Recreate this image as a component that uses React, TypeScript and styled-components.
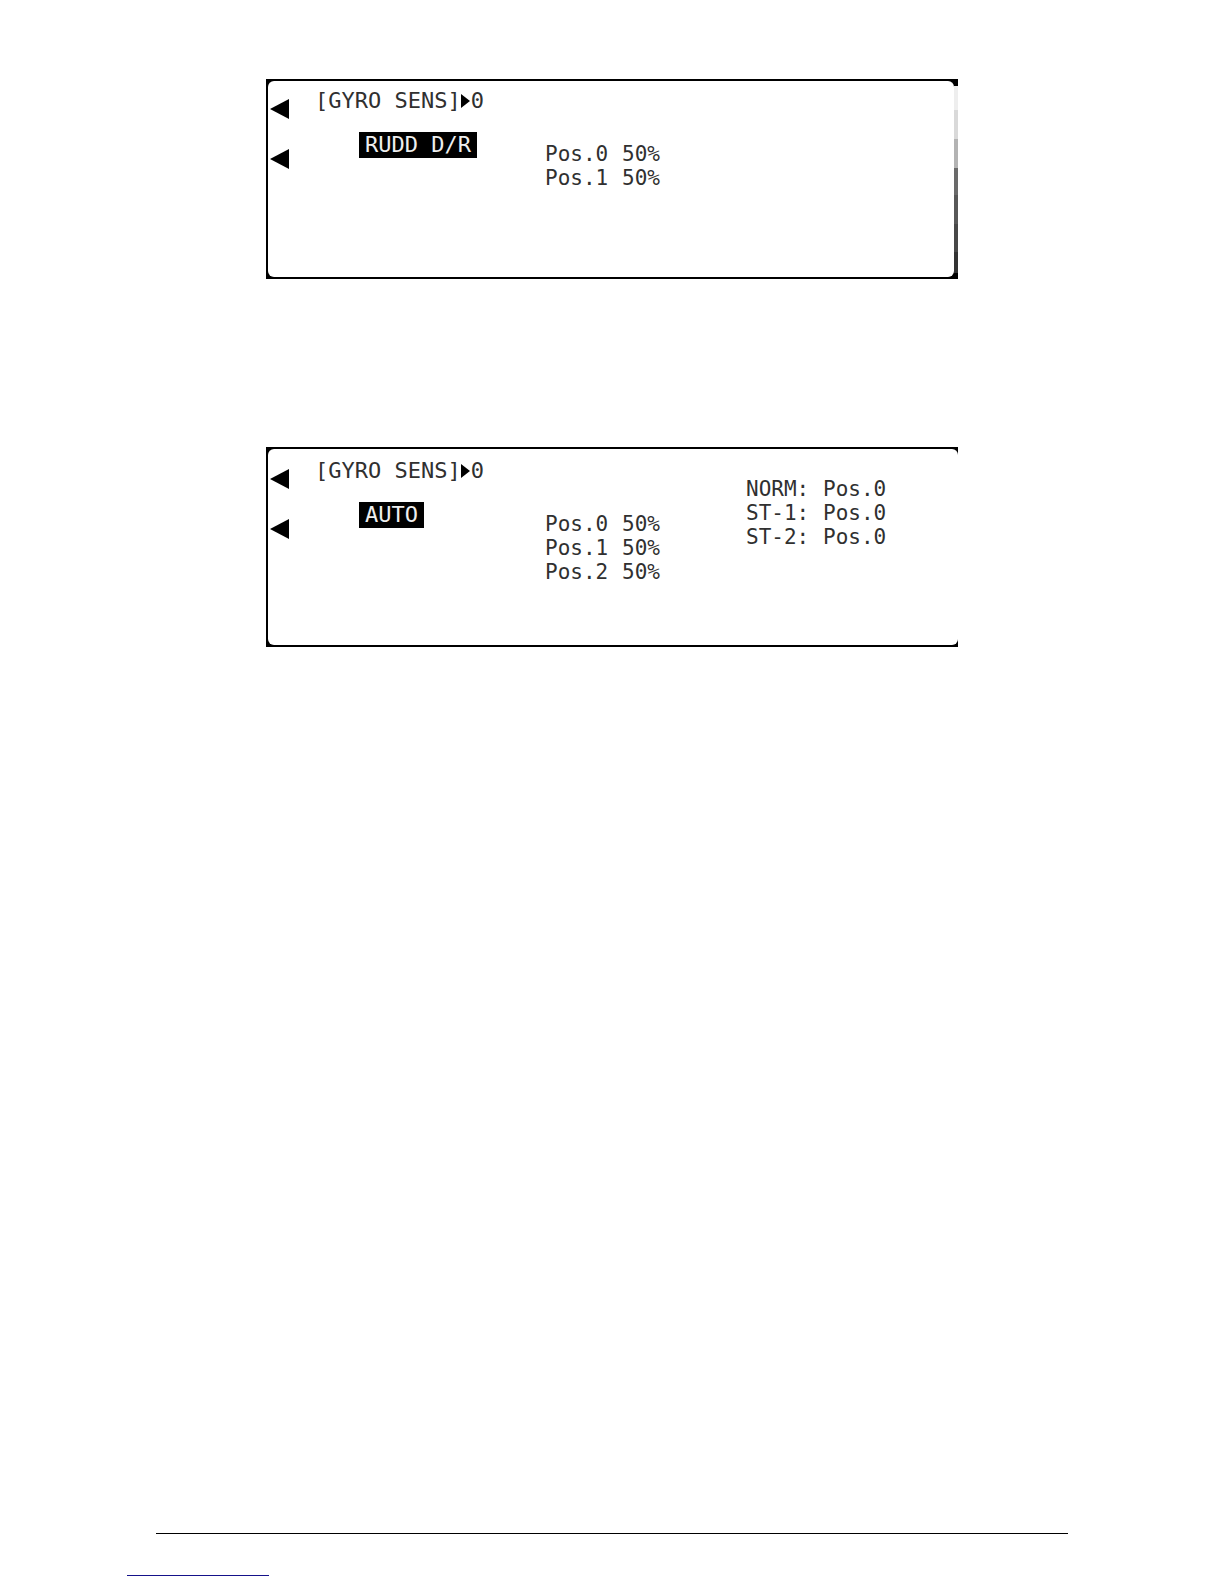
import React from "react";
import styled, { createGlobalStyle } from "styled-components";

const GlobalStyle = createGlobalStyle`
  *, *::before, *::after { box-sizing: border-box; }
  body { margin: 0; background: #fff; }
`;

const Page = styled.div`
  display: flex;
  flex-direction: column;
  min-height: 100vh;
  padding: 79px 0 8px;
`;

const Figures = styled.main`
  display: flex;
  flex-direction: column;
  gap: 168px;
  width: 100%;
  max-width: 692px;
  margin: 0 auto;
`;

const EDGE_FADE = `linear-gradient(
  #eee 0 24px, #d9d9d9 24px 53px, #b3b3b3 53px 82px,
  #6a6a6a 82px 109px, #585858 109px 138px, #484848 138px 166px, #333 166px
)`;

const Bezel = styled.section<{ $shaded?: boolean }>`
  display: flex;
  position: relative;
  padding: 2px ${(p) => (p.$shaded ? 4 : 0)}px 2px 2px;
  background: #000;

  &::after {
    content: "";
    display: ${(p) => (p.$shaded ? "block" : "none")};
    position: absolute;
    inset: 7px 0 6px auto;
    width: 4px;
    background: ${EDGE_FADE};
  }
`;

const Display = styled.div<{ $inset: number }>`
  display: grid;
  grid-template-columns: 47px 230px 201px 1fr;
  flex: 1;
  min-height: 196px;
  padding-top: ${(p) => p.$inset}px;
  border-radius: 6px;
  background: #fff;
  color: #303030;
  font: 21px/24px "DejaVu Sans Mono", monospace;
  white-space: nowrap;
`;

const Pointers = styled.div`
  display: flex;
  flex-direction: column;
  gap: 30px;
  padding: 10px 0 0 2px;
`;

const Pointer = styled.svg`
  display: block;
  width: 20px;
  height: 20px;
  fill: #000;
`;

const Menu = styled.div`
  display: flex;
  flex-direction: column;
  align-items: flex-start;
  gap: 19px;
  font-size: 22px;
`;

const Heading = styled.h2`
  display: flex;
  align-items: center;
  margin: 0;
  font: inherit;
`;

const Cursor = styled.svg`
  display: block;
  width: 10px;
  height: 14px;
  fill: #000;
`;

const Highlight = styled.span`
  margin-left: 44px;
  padding: 1px 6px;
  background: #000;
  color: #eee;
`;

const Readings = styled.table<{ $top: number }>`
  align-self: start;
  justify-self: start;
  margin-top: ${(p) => p.$top}px;
  border-collapse: collapse;

  th, td {
    padding: 0;
    font-weight: 400;
    text-align: left;
  }

  th { min-width: 77px; }
`;

const Rule = styled.hr`
  width: auto;
  height: 1px;
  margin: auto 156px 41px;
  border: 0;
  background: #000;
`;

const LinkLine = styled.div`
  width: 142px;
  height: 1px;
  margin-left: 127px;
  background: #15128a;
`;

type Row = [string, string];

interface ScreenProps {
  source: string;
  sens: Row[];
  modes?: Row[];
  inset: number;
  shaded?: boolean;
}

function Values({ rows, top }: { rows: Row[]; top: number }) {
  return (
    <Readings $top={top}>
      <tbody>
        {rows.map(([label, value]) => (
          <tr key={label}>
            <th scope="row">{label}</th>
            <td>{value}</td>
          </tr>
        ))}
      </tbody>
    </Readings>
  );
}

function LeftPointer() {
  return (
    <Pointer viewBox="0 0 20 20" aria-hidden="true">
      <path d="M0 10 19 0v20z" />
    </Pointer>
  );
}

function Screen({ source, sens, modes, inset, shaded }: ScreenProps) {
  return (
    <Bezel $shaded={shaded}>
      <Display $inset={inset}>
        <Pointers>
          <LeftPointer />
          <LeftPointer />
        </Pointers>
        <Menu>
          <Heading>
            <span>[GYRO SENS]</span>
            <Cursor viewBox="0 0 10 14" aria-hidden="true">
              <path d="M0 0 9 7 0 14z" />
            </Cursor>
            <span>0</span>
          </Heading>
          <Highlight>{source}</Highlight>
        </Menu>
        <Values rows={sens} top={53} />
        {modes && <Values rows={modes} top={18} />}
      </Display>
    </Bezel>
  );
}

export default function App() {
  return (
    <Page>
      <GlobalStyle />
      <Figures>
        <Screen
          shaded
          source="RUDD D/R"
          inset={8}
          sens={[
            ["Pos.0", "50%"],
            ["Pos.1", "50%"],
          ]}
        />
        <Screen
          source="AUTO"
          inset={10}
          sens={[
            ["Pos.0", "50%"],
            ["Pos.1", "50%"],
            ["Pos.2", "50%"],
          ]}
          modes={[
            ["NORM:", "Pos.0"],
            ["ST-1:", "Pos.0"],
            ["ST-2:", "Pos.0"],
          ]}
        />
      </Figures>
      <Rule />
      <LinkLine />
    </Page>
  );
}
